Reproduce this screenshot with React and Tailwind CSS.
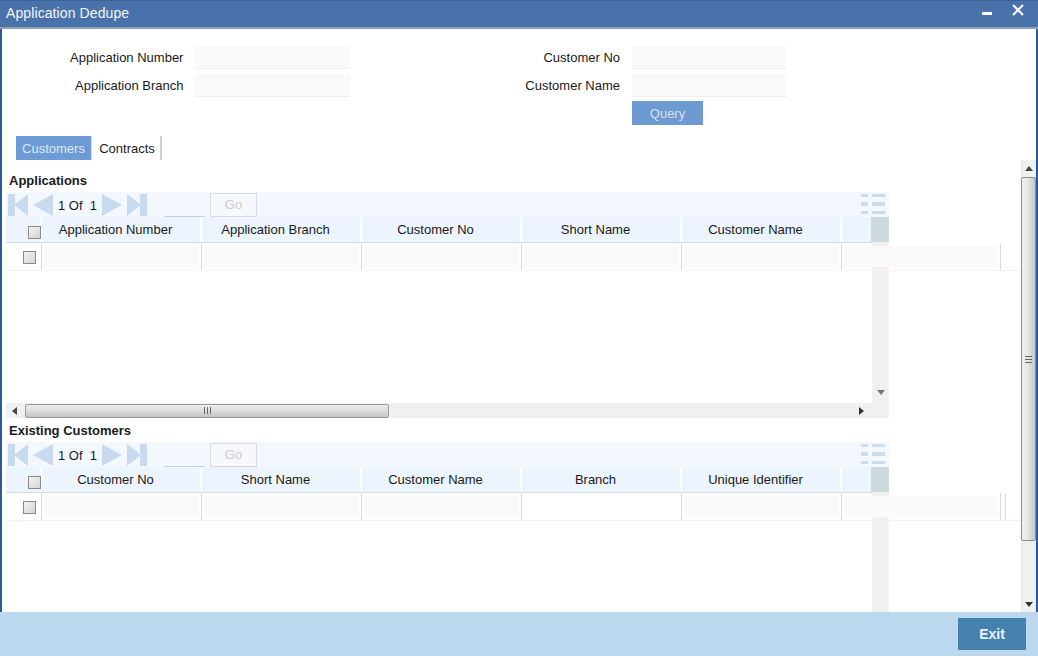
const APP_COLS = ['Application Number', 'Application Branch', 'Customer No', 'Short Name', 'Customer Name']
const CUST_COLS = ['Customer No', 'Short Name', 'Customer Name', 'Branch', 'Unique Identifier']

function Field({ label, labelWidth }) {
  return (
    <div className="flex items-center h-[28px]">
      <label className="text-right text-[13px] text-[#1a1a1a] pr-[12px] pt-[2px]" style={{ width: labelWidth }}>{label}</label>
      <div className="w-[155px] h-[23px] bg-[#fafafa] border-b border-[#eeeeee]" />
    </div>
  )
}

function Checkbox({ className }) {
  return <div className={`w-[13px] h-[13px] border border-[#8a8a8a] bg-gradient-to-br from-[#f4f4f4] to-[#d4d4d4] ${className}`} />
}

function Triangle({ dir }) {
  return (
    <svg width="20" height="22" viewBox="0 0 20 22" fill="#c8daf0">
      {dir === 'first' && <path d="M0 0h7v22H0zM20 0v22L6 11z" />}
      {dir === 'prev' && <path d="M20 0v22L0 11z" />}
      {dir === 'next' && <path d="M0 0v22l20-11z" />}
      {dir === 'last' && <path d="M0 0v22l14-11zM13 0h7v22h-7z" />}
    </svg>
  )
}

function GridIcon() {
  return (
    <svg width="25" height="21" viewBox="0 0 25 21" fill="#cbdcf1">
      <path d="M0 0h7v3H0zM11 0h13v3H11zM0 8h7v4H0zM11 8h13v4H11zM0 17h7v3H0zM11 17h13v3H11z" />
    </svg>
  )
}

function Toolbar() {
  return (
    <div className="flex items-end h-[25px] w-[883px] bg-[#f3f8fe] relative">
      <div className="flex items-center gap-[5px] pl-[2px] h-[24px]">
        <Triangle dir="first" />
        <Triangle dir="prev" />
      </div>
      <span className="w-[49px] text-center text-[13px] text-[#1a1a1a] self-center pt-[2px] whitespace-pre">1 Of  1</span>
      <div className="flex items-center gap-[5px] h-[24px]">
        <Triangle dir="next" />
        <Triangle dir="last" />
      </div>
      <div className="w-[41px] h-px bg-[#c8d0da] ml-[17px]" />
      <button className="ml-[5px] w-[47px] h-[24px] border border-[#d6dbe1] bg-[#f6f8fb] text-[13px] text-[#cccccc]">Go</button>
      <div className="absolute right-[3px] top-[2px]"><GridIcon /></div>
    </div>
  )
}

function Section({ title, cols, whiteCell, extraLine }) {
  return (
    <section className="h-[250px] pl-[4px] relative">
      <h3 className="h-[24px] pl-[3px] pt-[4px] text-[13px] leading-[17px] font-bold text-[#1a1a1a]">{title}</h3>
      <Toolbar />
      <div className="relative">
        <div className="flex w-[883px] h-[26px] bg-[#ecf4fd] border-b border-[#cfdcec]">
          <div className="w-[36px] shrink-0 border-r-2 border-white flex items-center justify-end">
            <Checkbox className="mt-[5px] -mr-px" />
          </div>
          {cols.map((c) => (
            <div key={c} className="w-[160px] shrink-0 border-r-2 border-white text-center text-[13px] leading-[26px] text-[#1a1a1a] pr-[11px]">{c}</div>
          ))}
          <div className="flex-1" />
          <div className="w-[18px] h-[25px] bg-[#cddadd]" />
        </div>
        <div className="flex w-[1015px] h-[28px] relative z-10 border-b border-[#f8f0ec]">
          <div className="w-[36px] shrink-0 flex items-center justify-end pr-[5px] pt-px border-r border-[#d5dce6]">
            <Checkbox />
          </div>
          {[0, 1, 2, 3, 4].map((i) => (
            <div key={i} className="w-[160px] shrink-0 border-r border-[#d5dce6] px-[2px] py-[3px]">
              <div className={`h-full ${whiteCell === i ? 'bg-white' : 'bg-[#fafafa]'}`} />
            </div>
          ))}
          <div className="w-[159px] shrink-0 border-r border-[#d5dce6] px-[2px] py-[3px]">
            <div className="h-full bg-[#fafafa]" />
          </div>
          {extraLine && <div className="w-[5px] shrink-0 border-r border-[#d5dce6]" />}
        </div>
        {/* inner vertical scrollbar */}
        <div className="absolute left-[866px] top-[25px] w-[17px] h-[161px] bg-[#f0f0f0] border-x border-[#f4f4f4] flex items-end justify-center pb-[8px]">
          <svg width="8" height="5" viewBox="0 0 8 5"><path d="M0 0h8L4 5z" fill="#777777" /></svg>
        </div>
        {/* inner horizontal scrollbar */}
        <div className="absolute left-0 top-[186px] w-[883px] h-[15px] bg-[#f0f0f0] flex items-center">
          <svg className="ml-[6px]" width="5" height="8" viewBox="0 0 5 8"><path d="M5 0v8L0 4z" fill="#444444" /></svg>
          <div className="ml-[8px] w-[364px] h-[14px] rounded-[2px] border border-[#9a9a9a] bg-gradient-to-b from-[#ececec] via-[#dcdcdc] to-[#c4c4c4] flex items-center justify-center">
            <span className="w-[7px] h-[7px] border-x border-[#666666] flex justify-center"><span className="w-px h-full bg-[#666666]" /></span>
          </div>
          <svg className="ml-[470px]" width="5" height="8" viewBox="0 0 5 8"><path d="M0 0v8l5-4z" fill="#333333" /></svg>
        </div>
      </div>
    </section>
  )
}

function OuterScrollbar() {
  return (
    <div className="absolute right-0 top-0 bottom-0 w-[15px] bg-[#f0f0f0] border-x border-[#e6e6e6] flex flex-col items-center">
      <svg className="mt-[6px]" width="8" height="5" viewBox="0 0 8 5"><path d="M4 0l4 5H0z" fill="#444444" /></svg>
      <div className="mt-[6px] w-[15px] h-[364px] shrink-0 rounded-[2px] border border-[#8f8f8f] bg-gradient-to-r from-[#f0f0f0] via-[#e4e4e4] to-[#c4c4c4] flex items-center justify-center">
        <span className="w-[7px] h-[7px] border-y border-[#666666] flex items-center"><span className="h-px w-full bg-[#666666]" /></span>
      </div>
      <svg className="mt-auto mb-[5px]" width="8" height="5" viewBox="0 0 8 5"><path d="M0 0h8L4 5z" fill="#333333" /></svg>
    </div>
  )
}

export default function App() {
  return (
    <div className="w-[1038px] h-[658px] bg-white flex flex-col overflow-hidden font-['Liberation_Sans',Arial,sans-serif]">
      <div className="flex-1 min-h-0 flex flex-col border-x-2 border-[#2d5a94]">
        {/* title bar */}
        <header className="h-[29px] shrink-0 -mx-[2px] px-[6px] bg-[#4a72aa] border-b-2 border-[#8da2b5] border-t border-t-[#3a619a] flex items-start justify-between text-white">
          <h1 className="text-[14px] leading-[24px] tracking-[0.1px] font-normal text-[#f2f6fb]">Application Dedupe</h1>
          <div className="flex items-start">
            <span className="w-[10px] h-[3px] bg-white mt-[11px] mr-[20px]" />
            <svg className="mt-[3px] mr-[8px]" width="12" height="12" viewBox="0 0 12 12" stroke="white" strokeWidth="2"><path d="M1 1l10 10M11 1L1 11" /></svg>
          </div>
        </header>

        {/* query form */}
        <div className="h-[107px] shrink-0 pt-[14px] flex">
          <div className="w-[348px]">
            <Field label="Application Number" labelWidth={194} />
            <Field label="Application Branch" labelWidth={194} />
          </div>
          <div>
            <Field label="Customer No" labelWidth={282} />
            <Field label="Customer Name" labelWidth={282} />
            <button className="block ml-[282px] mt-[2px] w-[71px] h-[24px] pt-[2px] bg-[#6e9ad2] text-[13px] text-[#d5e0ee]">Query</button>
          </div>
        </div>

        {/* tabs */}
        <div className="h-[24px] shrink-0 ml-[14px] flex text-[13px] leading-[26px]">
          <div className="w-[75px] text-center bg-[#6c9bd6] text-[#dfe9f5]">Customers</div>
          <div className="w-[71px] pl-[2px] text-center text-[#1a1a1a] border-r-2 border-[#d0d0d0] border-l border-l-[#d8d8d8]">Contracts</div>
        </div>

        {/* scrolled content */}
        <div className="relative flex-1 min-h-0 overflow-hidden">
          <div className="pt-[8px]">
            <Section title="Applications" cols={APP_COLS} />
            <Section title="Existing Customers" cols={CUST_COLS} whiteCell={3} extraLine />
          </div>
          <OuterScrollbar />
        </div>
      </div>

      {/* footer */}
      <footer className="h-[44px] shrink-0 bg-[#bcd8ee] flex items-center justify-end pr-[12px] mb-[2px]">
        <button className="w-[68px] h-[32px] bg-[#4682b0] text-[14px] font-bold text-[#eaf3fa]">Exit</button>
      </footer>
    </div>
  )
}
